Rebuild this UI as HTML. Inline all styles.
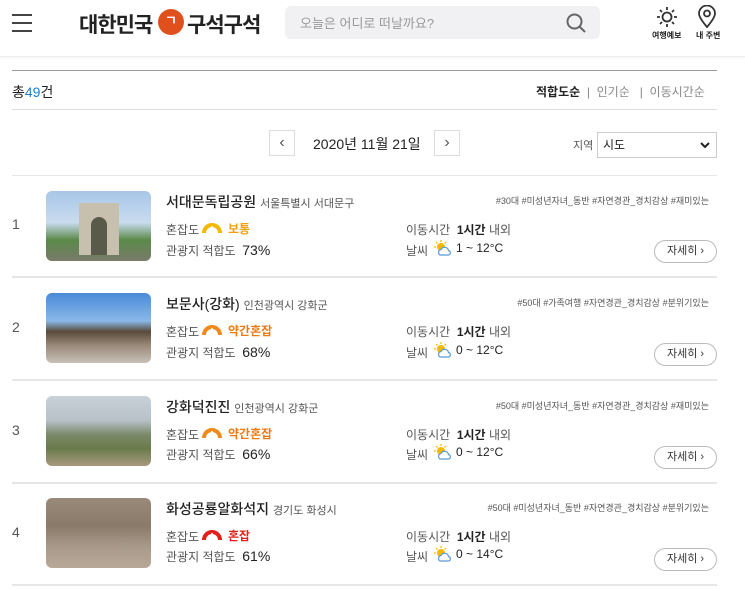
<!DOCTYPE html>
<html><head><meta charset="utf-8"><style>
*{margin:0;padding:0;box-sizing:border-box}
body{width:745px;height:589px;background:#fff;font-family:"Liberation Sans","Noto Sans CJK KR",sans-serif;color:#222;position:relative;overflow:hidden}
.a{position:absolute;white-space:nowrap}
.hdr{position:absolute;left:0;top:0;width:745px;height:57px;border-bottom:1px solid #eee;box-shadow:0 1px 3px rgba(0,0,0,.05)}
.img{position:absolute;left:46px;width:105px;height:70px;border-radius:6px;overflow:hidden}
.line{position:absolute;left:12px;width:705px;height:2px;background:#e6e6e6}
.btn{position:absolute;left:654px;width:63px;height:23px;border:1px solid #bbb;border-radius:12px;font-size:11px;color:#333;text-align:center;line-height:21px}
.lbl{font-size:12px;color:#555}
.t{font-size:14px;font-weight:500}
</style></head><body>
<div class="hdr"></div>
<div class="a" style="left:12px;top:14px;width:20px;height:2px;background:#444"></div>
<div class="a" style="left:12px;top:22px;width:20px;height:2px;background:#444"></div>
<div class="a" style="left:12px;top:30px;width:20px;height:2px;background:#444"></div>
<div class="a" style="left:79px;top:9px;font-size:21px;font-weight:bold;color:#222;letter-spacing:-1px">대한민국</div>
<div class="a" style="left:158px;top:9px;width:26px;height:26px;border-radius:50%;background:#e0501c;color:#fff;font-size:13px;text-align:center;line-height:24px;font-weight:bold">ㄱ</div>
<div class="a" style="left:187px;top:9px;font-size:21px;font-weight:bold;color:#222;letter-spacing:-1px">구석구석</div>
<div class="a" style="left:285px;top:6px;width:315px;height:33px;background:#f1f1f3;border-radius:6px"></div>
<div class="a" style="left:300px;top:13px;font-size:13px;color:#999">오늘은 어디로 떠날까요?</div>
<svg class="a" style="left:565px;top:12px" width="22" height="22" viewBox="0 0 22 22"><circle cx="9.5" cy="9.5" r="7" fill="none" stroke="#666" stroke-width="2"/><path d="M14.5 14.5L20 20" stroke="#666" stroke-width="2"/></svg>
<svg class="a" style="left:656px;top:6px" width="22" height="22" viewBox="0 0 22 22"><circle cx="11" cy="11" r="4.5" fill="none" stroke="#333" stroke-width="1.8"/><g stroke="#333" stroke-width="1.8"><path d="M11 1v3M11 18v3M1 11h3M18 11h3M4 4l2 2M16 16l2 2M4 18l2-2M16 6l2-2"/></g></svg>
<div class="a" style="left:652px;top:30px;font-size:8px;font-weight:bold">여행예보</div>
<svg class="a" style="left:697px;top:5px" width="20" height="24" viewBox="0 0 20 24"><path d="M10 22C4 15 2 11 2 8.5a8 8 0 0 1 16 0C18 11 16 15 10 22z" fill="none" stroke="#333" stroke-width="1.8"/><circle cx="10" cy="8.5" r="3" fill="none" stroke="#333" stroke-width="1.8"/></svg>
<div class="a" style="left:696px;top:30px;font-size:8px;font-weight:bold">내 주변</div>

<div class="a" style="left:12px;top:70px;width:705px;height:1px;background:#999"></div>
<div class="a" style="left:12px;top:82px;font-size:14px">총<span style="color:#1e7fc8">49</span>건</div>
<div class="a" style="left:536px;top:83px;font-size:12px;color:#888"><b style="color:#222">적합도순</b> &nbsp;|&nbsp; 인기순 &nbsp; | &nbsp;이동시간순</div>
<div class="a" style="left:12px;top:109px;width:705px;height:1px;background:#ddd"></div>
<div class="a" style="left:269px;top:130px;width:26px;height:26px;border:1px solid #ddd;text-align:center;line-height:24px;color:#555">‹</div>
<div class="a" style="left:313px;top:134px;font-size:14px">2020년 11월 21일</div>
<div class="a" style="left:434px;top:130px;width:26px;height:26px;border:1px solid #ddd;text-align:center;line-height:24px;color:#555">›</div>
<div class="a" style="left:573px;top:137px;font-size:11px;color:#555">지역</div>
<div class="a" style="left:597px;top:132px;width:120px;height:26px;border:1px solid #ccc;font-size:12px;line-height:24px;padding-left:5px">시도<svg style="position:absolute;right:6px;top:9px" width="10" height="7"><path d="M1 1l4 4 4-4" fill="none" stroke="#222" stroke-width="2"/></svg></div>
<div class="line" style="top:175px;height:1px"></div>

<svg width="0" height="0" style="position:absolute"><defs><g id="w"><circle cx="8" cy="7" r="4" fill="#f5b800"/><g stroke="#f5b800" stroke-width="1.2"><path d="M8 0v2M1 7h2M3 2l1.5 1.5M13 2l-1.5 1.5"/></g><path d="M7 15a3 3 0 0 1 1-5.5a4 4 0 0 1 7.5 1a2.3 2.3 0 0 1 0 4.5z" fill="#fff" stroke="#5a9bd4" stroke-width="1.2"/></g></defs></svg>

<div class="a" style="left:12px;top:216px;font-size:14px;color:#555">1</div>
<div class="img" style="top:191px;background:linear-gradient(#a8c6e8 0,#c9dcef 45%,#5a8a4a 70%,#7a7a6a 100%)"><div style="position:absolute;left:33px;top:12px;width:40px;height:52px;background:#c8c0ae"></div><div style="position:absolute;left:45px;top:26px;width:16px;height:38px;background:#5a5a4a;border-radius:8px 8px 0 0"></div></div>
<div class="a t" style="left:166px;top:192px">서대문독립공원 <span style="font-size:11px;color:#555;font-weight:normal">서울특별시 서대문구</span></div>
<div class="a lbl" style="left:166px;top:221px">혼잡도</div>
<svg class="a" style="left:202px;top:222px" width="20" height="12"><path d="M2 11A8 8 0 0 1 18 11" fill="none" stroke="#f5b800" stroke-width="4"/><path d="M10 4v7" stroke="#fff" stroke-width="1.5"/></svg>
<div class="a" style="left:228px;top:220px;font-size:12px;font-weight:bold;color:#f0a010">보통</div>
<div class="a lbl" style="left:166px;top:242px">관광지 적합도 &nbsp;<span style="font-size:14px;color:#222">73%</span></div>
<div class="a" style="right:36px;top:194px;font-size:9px;color:#555">#30대 #미성년자녀_동반 #자연경관_경치감상 #재미있는</div>
<div class="a lbl" style="left:406px;top:221px">이동시간 &nbsp;<b style="color:#222">1시간</b> 내외</div>
<div class="a lbl" style="left:406px;top:242px">날씨</div>
<svg class="a" style="left:433px;top:240px" width="20" height="17"><use href="#w"/></svg>
<div class="a" style="left:456px;top:241px;font-size:12px;color:#222">1 ~ 12°C</div>
<div class="btn" style="top:240px">자세히 ›</div>
<div class="line" style="top:276px"></div>

<div class="a" style="left:12px;top:319px;font-size:14px;color:#555">2</div>
<div class="img" style="top:293px;background:linear-gradient(#4a8ad8 0,#8ab8e8 40%,#5a4a3a 55%,#9a8a7a 75%,#c8c0b8 100%)"></div>
<div class="a t" style="left:166px;top:294px">보문사(강화) <span style="font-size:11px;color:#555;font-weight:normal">인천광역시 강화군</span></div>
<div class="a lbl" style="left:166px;top:323px">혼잡도</div>
<svg class="a" style="left:202px;top:324px" width="20" height="12"><path d="M2 11A8 8 0 0 1 18 11" fill="none" stroke="#f08a1c" stroke-width="4"/><path d="M10 4v7" stroke="#fff" stroke-width="1.5"/></svg>
<div class="a" style="left:228px;top:322px;font-size:12px;font-weight:bold;color:#ee7a10">약간혼잡</div>
<div class="a lbl" style="left:166px;top:344px">관광지 적합도 &nbsp;<span style="font-size:14px;color:#222">68%</span></div>
<div class="a" style="right:36px;top:296px;font-size:9px;color:#555">#50대 #가족여행 #자연경관_경치감상 #분위기있는</div>
<div class="a lbl" style="left:406px;top:323px">이동시간 &nbsp;<b style="color:#222">1시간</b> 내외</div>
<div class="a lbl" style="left:406px;top:344px">날씨</div>
<svg class="a" style="left:433px;top:342px" width="20" height="17"><use href="#w"/></svg>
<div class="a" style="left:456px;top:343px;font-size:12px;color:#222">0 ~ 12°C</div>
<div class="btn" style="top:343px">자세히 ›</div>
<div class="line" style="top:379px"></div>

<div class="a" style="left:12px;top:422px;font-size:14px;color:#555">3</div>
<div class="img" style="top:396px;background:linear-gradient(#c8d0d8 0,#b8c0c8 35%,#7a8a6a 55%,#6a7a4a 75%,#a89a80 100%)"></div>
<div class="a t" style="left:166px;top:397px">강화덕진진 <span style="font-size:11px;color:#555;font-weight:normal">인천광역시 강화군</span></div>
<div class="a lbl" style="left:166px;top:426px">혼잡도</div>
<svg class="a" style="left:202px;top:427px" width="20" height="12"><path d="M2 11A8 8 0 0 1 18 11" fill="none" stroke="#f08a1c" stroke-width="4"/><path d="M10 4v7" stroke="#fff" stroke-width="1.5"/></svg>
<div class="a" style="left:228px;top:425px;font-size:12px;font-weight:bold;color:#ee7a10">약간혼잡</div>
<div class="a lbl" style="left:166px;top:446px">관광지 적합도 &nbsp;<span style="font-size:14px;color:#222">66%</span></div>
<div class="a" style="right:36px;top:399px;font-size:9px;color:#555">#50대 #미성년자녀_동반 #자연경관_경치감상 #재미있는</div>
<div class="a lbl" style="left:406px;top:426px">이동시간 &nbsp;<b style="color:#222">1시간</b> 내외</div>
<div class="a lbl" style="left:406px;top:446px">날씨</div>
<svg class="a" style="left:433px;top:444px" width="20" height="17"><use href="#w"/></svg>
<div class="a" style="left:456px;top:445px;font-size:12px;color:#222">0 ~ 12°C</div>
<div class="btn" style="top:446px">자세히 ›</div>
<div class="line" style="top:482px"></div>

<div class="a" style="left:12px;top:524px;font-size:14px;color:#555">4</div>
<div class="img" style="top:498px;background:linear-gradient(#9a8a7a 0,#8a7a6a 40%,#a89a8a 70%,#b8a898 100%)"></div>
<div class="a t" style="left:166px;top:499px">화성공룡알화석지 <span style="font-size:11px;color:#555;font-weight:normal">경기도 화성시</span></div>
<div class="a lbl" style="left:166px;top:528px">혼잡도</div>
<svg class="a" style="left:202px;top:529px" width="20" height="12"><path d="M2 11A8 8 0 0 1 18 11" fill="none" stroke="#e0201b" stroke-width="4"/><path d="M10 4v7" stroke="#fff" stroke-width="1.5"/></svg>
<div class="a" style="left:228px;top:527px;font-size:12px;font-weight:bold;color:#e0201b">혼잡</div>
<div class="a lbl" style="left:166px;top:548px">관광지 적합도 &nbsp;<span style="font-size:14px;color:#222">61%</span></div>
<div class="a" style="right:36px;top:501px;font-size:9px;color:#555">#50대 #미성년자녀_동반 #자연경관_경치감상 #분위기있는</div>
<div class="a lbl" style="left:406px;top:528px">이동시간 &nbsp;<b style="color:#222">1시간</b> 내외</div>
<div class="a lbl" style="left:406px;top:548px">날씨</div>
<svg class="a" style="left:433px;top:546px" width="20" height="17"><use href="#w"/></svg>
<div class="a" style="left:456px;top:547px;font-size:12px;color:#222">0 ~ 14°C</div>
<div class="btn" style="top:548px">자세히 ›</div>
<div class="line" style="top:584px"></div>
</body></html>
